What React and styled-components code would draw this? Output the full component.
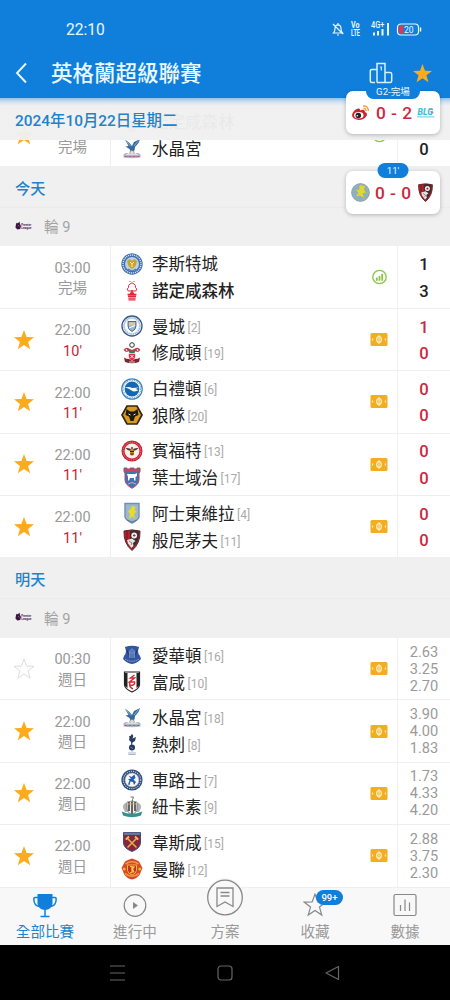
import React from 'react';
import styled, { createGlobalStyle } from 'styled-components';

const GlobalStyle = createGlobalStyle`
  * {
    box-sizing: border-box;
  }
  body {
    margin: 0;
    background: #fff;
    font-family: Roboto, 'Noto Sans CJK TC', sans-serif;
  }
  svg {
    display: block;
  }
`;

const Screen = styled.div`
  position: relative;
  width: 450px;
  height: 1000px;
  display: flex;
  flex-direction: column;
  overflow: hidden;
`;
const Header = styled.header`
  height: 98px;
  flex: none;
  background: #107fdc;
  color: #e8f8ff;
`;
const StatusBar = styled.div`
  height: 48px;
  padding: 11px 28px 0 66px;
  display: flex;
  align-items: center;
  justify-content: space-between;
  font-size: 15.6px;
`;
const StatusIcons = styled.div`
  display: flex;
  align-items: center;
  padding-bottom: 1px;
`;
const TitleBar = styled.div`
  height: 50px;
  padding: 0 17px 0 15px;
  display: flex;
  align-items: center;
`;
const Title = styled.h1`
  flex: 1;
  margin: 0 0 0 23px;
  padding-top: 2px;
  font-size: 21.5px;
  line-height: 30px;
  font-weight: 500;
`;
const TitleActions = styled.div`
  display: flex;
  align-items: center;
  gap: 19px;
`;

const List = styled.main`
  position: relative;
  height: 790px;
  flex: none;
  padding-top: 6.6px;
  overflow: hidden;
`;
const StickyDay = styled.div`
  position: absolute;
  top: 0;
  left: 0;
  width: 100%;
  height: 42px;
  padding: 0 15px 1px;
  display: flex;
  align-items: center;
  background: linear-gradient(#8fc0eb 0, #d3e3f1 4px, rgba(240, 240, 240, 0.97) 8px);
  color: #1d83cc;
  font-size: 15.4px;
  font-weight: 500;
`;
const DayHeader = styled.div`
  height: 41px;
  padding: 0 15px;
  display: flex;
  align-items: center;
  background: #f0f0f0;
  border-bottom: 1px solid #ebebeb;
  color: #1d83cc;
  font-size: 15.2px;
  font-weight: 500;
`;
const RoundHeader = styled.div`
  height: 38.5px;
  padding: 0 15px 2.5px;
  display: flex;
  align-items: center;
  gap: 12px;
  background: #f0f0f0;
  color: #a3a3a3;
  font-size: 14.6px;
`;

const Row = styled.div`
  height: 62.4px;
  display: flex;
  background: #fff;
  border-bottom: 1px solid #efefef;
`;
const StarCell = styled.div`
  width: 48px;
  display: flex;
  align-items: center;
  justify-content: center;
`;
const TimeCell = styled.div`
  width: 49px;
  margin-right: 13px;
  padding-top: 4px;
  display: flex;
  flex-direction: column;
  justify-content: center;
  align-items: center;
  color: #999;
  font-size: 14.5px;
  line-height: 20.4px;
  white-space: nowrap;
`;
const StateText = styled.span`
  margin-top: ${p => (p.$alone ? 21 : 0)}px;
`;
const Minute = styled.span`
  color: #c41f35;
`;
const Teams = styled.div`
  flex: 1;
  padding-left: 9.5px;
  display: flex;
  flex-direction: column;
  justify-content: center;
  border-left: 1px solid #eee;
`;
const Team = styled.div`
  height: 26.8px;
  display: flex;
  align-items: center;
  color: #222;
  font-size: 16.5px;
  line-height: 24px;
  font-weight: ${p => (p.$winner ? 500 : 400)};
`;
const TeamName = styled.span`
  margin-left: 9.5px;
  padding-top: 3px;
`;
const Rank = styled.span`
  margin-left: 2.5px;
  padding-top: 3px;
  color: #aaa;
  font-size: 12px;
`;
const MarkCell = styled.div`
  width: 35px;
  padding-right: 1px;
  display: flex;
  align-items: center;
  justify-content: center;
`;
const ScoreCell = styled.div`
  width: 53px;
  padding-top: 3px;
  display: flex;
  flex-direction: column;
  align-items: center;
  justify-content: center;
  border-left: 1px solid #f1f1f1;
  color: ${p => (p.$live ? '#c9293f' : '#222')};
  font-size: 16.6px;
  line-height: 26.4px;
  font-weight: 500;
`;
const OddsCell = styled(ScoreCell)`
  padding-top: 1px;
  color: #9a9a9a;
  font-size: 14.6px;
  line-height: 17px;
  font-weight: 400;
`;

const FloatCard = styled.div`
  position: absolute;
  top: ${p => p.$top}px;
  left: 346px;
  width: 94px;
  height: 43px;
  padding: 0 5px;
  display: flex;
  align-items: center;
  justify-content: space-between;
  background: #fff;
  border-radius: 7px;
  box-shadow: 0 1px 4px rgba(0, 0, 0, 0.25);
  color: #c9293f;
  font-size: 17.3px;
  font-weight: 500;
  word-spacing: 1px;
`;
const FloatScore = styled.span`
  padding-top: 1px;
`;
const FloatLabel = styled.span`
  position: absolute;
  top: -7.5px;
  left: 50%;
  transform: translateX(-50%);
  width: ${p => p.$width}px;
  height: 15px;
  line-height: 15px;
  border-radius: 8px;
  background: #107fdc;
  color: #e8f8ff;
  font-size: 9.6px;
  font-weight: 400;
  text-align: center;
  word-spacing: 0;
`;

const TabBar = styled.nav`
  height: 57px;
  flex: none;
  display: flex;
  background: #f8f8f8;
`;
const Tab = styled.div`
  position: relative;
  width: 90px;
  padding-top: ${p => (p.$raised ? 0 : 5)}px;
  display: flex;
  flex-direction: column;
  align-items: center;
  color: ${p => (p.$active ? '#1d83cc' : '#999')};
  font-size: 14.6px;
  line-height: 20px;
`;
const TabIcon = styled.div`
  height: ${p => (p.$raised ? 34 : 29)}px;
  margin-top: ${p => (p.$raised ? -10 : 0)}px;
  margin-bottom: ${p => (p.$raised ? 10 : 0)}px;
`;
const Badge = styled.span`
  position: absolute;
  top: 2px;
  left: 46px;
  width: 27px;
  height: 15px;
  line-height: 15px;
  border-radius: 8px;
  background: #107fdc;
  color: #fff;
  font-size: 9.5px;
  font-weight: 500;
  text-align: center;
`;
const SystemNav = styled.div`
  height: 55px;
  flex: none;
  padding: 0 109px;
  display: flex;
  align-items: center;
  justify-content: space-between;
  background: #000;
`;

const STAR = 'M11 1 L13.6 8.1 L21 8.3 L15.1 12.9 L17.2 20.2 L11 16 L4.8 20.2 L6.9 12.9 L1 8.3 L8.4 8.1 Z';

const Star = ({ size = 22, fill = '#fcab1c', stroke = 'none', width = 1 }) => (
  <svg width={size} height={size} viewBox="0 0 22 22">
    <path d={STAR} fill={fill} stroke={stroke} strokeWidth={width} />
  </svg>
);

const crests = {
  leicester: (
    <>
      <circle cx="11" cy="11" r="10.7" fill="#3f6fae" />
      <circle cx="11" cy="11" r="9" fill="none" stroke="#d5e3f4" strokeWidth="1.3" strokeDasharray="1.2 .8" />
      <circle cx="11" cy="11" r="7" fill="#bdd0e4" />
      <path d="M6 8 L9 6 L11 8 L13 6 L16 8 L14.5 13 L11 16 L7.5 13 Z" fill="#c9a227" />
      <path d="M9 9 L11 11 L13 9 M11 11 V14" stroke="#fff2b0" fill="none" />
      <path d="M7 16 L11 18 L15 16" stroke="#3f6fae" fill="none" />
    </>
  ),
  forest: (
    <>
      <path d="M8.5 1.5 H9.5 M12.5 1.5 H13.5" stroke="#e33" />
      <path d="M9 4 Q11 1.5 13 4 Q15 5 14.5 7.5 Q17 9 14.8 11 H7.2 Q5 9 7.5 7.5 Q7 5 9 4 Z" fill="#fff" stroke="#dd2935" strokeWidth="1" />
      <path d="M11 10 V15 M9 13 L11 14 L13 13" stroke="#dd2935" strokeWidth="1.5" fill="none" />
      <path d="M6.5 14.5 H15.5 M7 16.3 H15 M7.3 18.1 H14.7 M7.5 19.9 H14.5" stroke="#dd2935" strokeWidth="1.4" />
    </>
  ),
  mancity: (
    <>
      <circle cx="11" cy="11" r="10" fill="#f3f6fa" stroke="#345985" strokeWidth="1.3" />
      <circle cx="11" cy="11" r="8" fill="none" stroke="#9dbbd9" strokeWidth="1.6" strokeDasharray="1.5 .6" />
      <circle cx="11" cy="11" r="6.3" fill="#fff" />
      <path d="M7 6.500 H15 V11 Q15 14.5 11 16.5 Q7 14.5 7 11 Z" fill="#9ab4cb" stroke="#31507d" strokeWidth=".8" />
      <path d="M8 7.500 H14 V10.5 H8 Z" fill="#e0c795" />
      <path d="M8 13 L14 10.5" stroke="#fff" />
    </>
  ),
  southampton: (
    <>
      <circle cx="11" cy="3" r="2.3" fill="#fff" stroke="#333" />
      <path d="M2.5 8 Q5 4.5 8 6.5 L11 8 L14 6.5 Q17 4.5 19.5 8 L17 10 L12.5 9 L11 12 L9.5 9 L5 10 Z" fill="#c93a4c" />
      <path d="M5 7 L6 9 M16 7 L17 9" stroke="#fff" />
      <path d="M7.500 7 L11 10 L14.500 7 L13.500 11.500 H8.500 Z" fill="#2f7b50" />
      <path d="M7.5 11.5 H14.5 V15 Q14 18 11 19 Q8 18 7.5 15 Z" fill="#d93343" stroke="#fff" strokeWidth=".6" />
      <path d="M9.5 13 L12.5 16 M12.5 13 L9.5 16" stroke="#fff" strokeWidth=".9" />
      <path d="M3 15.5 Q5 17 8 17 L11 19 L14 17 Q17 17 19 15.5 L18 20 Q11 22.5 4 20 Z" fill="#7d2630" />
      <path d="M8 20 H14" stroke="#e9c2c2" />
    </>
  ),
  brighton: (
    <>
      <circle cx="11" cy="11" r="10.2" fill="#fff" stroke="#3b82bd" strokeWidth="1.2" />
      <circle cx="11" cy="11" r="8.8" fill="none" stroke="#6ea7d3" strokeWidth="1.2" strokeDasharray="1 .8" />
      <circle cx="11" cy="11" r="7.4" fill="#1568ae" />
      <path d="M3.8 9.6 Q8 8 11 10 L18 9.5 L14.5 11 L17.5 12 Q14 14.5 10.5 12.5 Q8.5 10.8 3.8 9.6 Z" fill="#fff" />
    </>
  ),
  wolves: (
    <>
      <path d="M6 2 H16 L21 11 L16 20 H6 L1 11 Z" fill="#d69b1f" stroke="#302615" strokeWidth="1.7" />
      <path d="M5.5 5 L9 7.5 H13 L16.5 5 L17.5 11 L14 12.5 L12.5 17 H9.5 L8 12.5 L4.5 11 Z" fill="#1c1915" />
      <path d="M7.5 10 L9.5 11 M14.5 10 L12.5 11" stroke="#fff" strokeWidth=".9" />
    </>
  ),
  brentford: (
    <>
      <circle cx="11" cy="11" r="10.5" fill="#c8202f" />
      <circle cx="11" cy="11" r="8.9" fill="none" stroke="#ef9ba0" strokeWidth=".8" strokeDasharray="1.3 1" />
      <circle cx="11" cy="11" r="7.5" fill="#f6efe9" />
      <path d="M4.500 8 Q9 7.5 11 10 Q13 7.5 17.500 8 Q15 11.5 11.5 11 H10.5 Q7 11.5 4.500 8 Z" fill="#4b4038" />
      <ellipse cx="11" cy="12.300" rx="2" ry="3.500" fill="#c98a33" />
      <path d="M9 11.5 H13 M9.2 14 H12.8 M11 7 V9" stroke="#272018" strokeWidth="1.2" />
    </>
  ),
  ipswich: (
    <>
      <path d="M3 1 H6 V2 H9 V1 H13 V2 H16 V1 H19 V5 L18 6 V13 Q18 17.5 11 21.3 Q4 17.5 4 13 V6 L3 5 Z" fill="#4272b4" stroke="#b8485a" strokeWidth="1" />
      <path d="M3.5 3.5 H18.5" stroke="#cb4a5a" strokeWidth="1.600" />
      <path d="M6 7 L14 7 L16 6 V9 L14.5 10 V13.500 H13 V11 H9 L8 13.500 H7 V10 Z" fill="#fff" />
      <path d="M7 17 L11 15.5 L15 17" stroke="#d8a7ae" fill="none" />
    </>
  ),
  villa: (
    <>
      <path d="M4 1.5 H18 V15 Q17.5 18 11 21 Q4.500 18 4 15 Z" fill="#9fb7cb" stroke="#6f91b2" strokeWidth="1.4" />
      <path d="M11 4 L14.500 5 L13.500 8 L15.500 9.5 L13 12 L14 17 L11.5 14.5 L8 17 L9 12 L7 9 L9.500 7.5 Z" fill="#eadb25" />
      <path d="M6 18 L11 20 L16 18" stroke="#58779b" fill="none" />
    </>
  ),
  villaRound: (
    <>
      <circle cx="11" cy="11" r="10.3" fill="#8caec6" stroke="#6d8caa" strokeWidth=".8" />
      <circle cx="11" cy="11" r="9" fill="none" stroke="#aab88a" strokeWidth="1.5" strokeDasharray="1.2 1" />
      <path d="M10 2.500 L16 3.500 L15 8 L17.500 11 L13.500 12 L15 17 L10 14.500 L6 16 L8.500 11 L5.500 7.500 L9.500 8 Z" fill="#e6d625" />
    </>
  ),
  bournemouth: (
    <>
      <path d="M3 2 Q11 -.2 19 2 Q19.5 14.5 11 21.5 Q2.500 14.5 3 2 Z" fill="#b5202b" stroke="#55252a" strokeWidth="1" />
      <path d="M9 2 Q14 0 18 3 Q18 10 15 15 L11 20 L9 12 Z" fill="#382d2f" />
      <path d="M6 2 V13" stroke="#7c1d26" strokeWidth="1.300" />
      <circle cx="13.2" cy="6.500" r="2.900" fill="#eee" />
      <path d="M13.200 5.200 V7.700 M12 6.500 H14.500" stroke="#b5202b" />
      <path d="M6 11 L11 9.500 L14.500 12 L12 14 L12.500 17 L10.500 19 L7 14.500 Z" fill="#e7e2e0" />
      <path d="M8 12 L11 14 L10 16" stroke="#6a5557" strokeWidth=".7" fill="none" />
    </>
  ),
  everton: (
    <>
      <path d="M4 3 Q11 .5 18 3 L17 7 Q17 10 19 12 L20 15 Q16 19.500 11 20 Q6 19.500 2 15 L3 12 Q5 10 5 7 Z" fill="#31559e" />
      <path d="M8.500 14 V7 L11 4.500 L13.500 7 V14 M8 9 H14" fill="#5877b4" stroke="#7f97c8" strokeWidth=".7" />
      <path d="M4 15 Q11 19.500 18 15" stroke="#93a9d0" fill="none" strokeWidth="1" strokeDasharray="1.500 .7" />
      <path d="M6 6 L7.500 11 M16 6 L14.500 11" stroke="#1d3975" />
    </>
  ),
  fulham: (
    <>
      <path d="M3.500 1 H18.500 V14 Q18 18 11 21 Q4 18 3.500 14 Z" fill="#fff" stroke="#222" strokeWidth="1.200" />
      <path d="M4 2 H6.500 V17 L4 15 Z M15.500 2 H18 V15 L15.500 17 Z" fill="#222" />
      <path d="M13.500 4 L9.500 7 H13.500 L8.500 11 H13.500 Q14.500 14.500 9 14.500 M9 11 Q7.500 16 12 18" fill="none" stroke="#d52b35" strokeWidth="1.500" />
    </>
  ),
  palace: (
    <>
      <path d="M4 1.500 L8.500 5 L11 8 L13 4 L19 1 L17.500 5 L14 9 L13.500 12.500 L10 14.500 L8.500 11 L4.500 8.500 L7.500 8 Z" fill="#39699c" />
      <path d="M5.500 3.500 L10 8.500 M17.500 2.500 L13 8" stroke="#8eb5d2" strokeWidth=".9" />
      <circle cx="11" cy="14.800" r="2.300" fill="#ddd" stroke="#777" strokeWidth=".6" />
      <path d="M2.500 16.500 Q5 14 8 16 H14 Q17 14 19.500 16.500 V19.500 Q11 21 2.500 19.500 Z" fill="#b4b6c6" />
      <path d="M3.500 18.500 H18.500" stroke="#a65a76" strokeWidth=".9" strokeDasharray="3 1" />
      <path d="M5 16.500 H17" stroke="#e4e4ea" strokeWidth=".8" />
    </>
  ),
  spurs: (
    <>
      <path d="M8 3.500 L10 2.500 L11 .8 L12.300 3 L11.500 5.500 L15 4 L14 8 L11.500 9.500 L11 12 H10.300 L10 9 L8 7 L8.500 5 Z" fill="#273a5f" />
      <circle cx="11" cy="14.500" r="3" fill="#22385f" />
      <path d="M9.500 14 L12 15.500" stroke="#a2aabf" strokeWidth=".7" />
      <path d="M10 18 H12 M7 20 H15 M7.500 21.500 H14.500" stroke="#a3aabb" strokeWidth=".9" />
    </>
  ),
  chelsea: (
    <>
      <circle cx="11" cy="11" r="10.600" fill="#2b4a86" />
      <circle cx="11" cy="11" r="8.700" fill="none" stroke="#c5cde0" strokeWidth="1.100" strokeDasharray="1.200 1" />
      <circle cx="11" cy="11" r="7" fill="#f5f6fa" stroke="#b1a27c" strokeWidth=".6" />
      <path d="M7.500 6.500 L10.500 8 L13.500 5.500 L14.500 9 L12.500 10.500 L15 13 L13 16 L12 13 L9.500 12.500 L8.500 16 L7 15.500 L8.500 11.500 L7 10 L10 9.800 Z" fill="#295bb2" />
    </>
  ),
  newcastle: (
    <>
      <path d="M9.500 1 H12.500 L11.500 3.500 V6" stroke="#777" fill="none" />
      <path d="M2 12 Q1.500 8 5 6.500 L7 10 H15 L17 6.500 Q20.500 8 20 12 L18 16 H4 Z" fill="#b3b3b5" />
      <path d="M6 6 Q11 4 16 6 V13 Q15.500 17 11 19 Q6.500 17 6 13 Z" fill="#eee" stroke="#555" strokeWidth=".6" />
      <path d="M8 6 V15 M11 5.500 V18 M14 6 V15" stroke="#292929" strokeWidth="1.400" />
      <path d="M7 8 H15" stroke="#c5a26c" strokeWidth="1" />
      <path d="M.8 15.500 Q11 20 21.200 15.500 L20 19.500 Q11 23 2 19.500 Z" fill="#35918f" />
    </>
  ),
  westham: (
    <>
      <path d="M2.500 1.500 H19.500 V12 Q19 17.500 11 20.500 Q3 17.500 2.500 12 Z" fill="#84273e" stroke="#4a4a76" strokeWidth="1" />
      <path d="M3 2.800 H19" stroke="#647ba8" strokeWidth="2.200" />
      <path d="M6 7 L15.500 16.500 M16 7 L6.500 16.500" stroke="#e9a44e" strokeWidth="1.700" />
      <path d="M4.800 8.500 L8 5.500 M14 5.500 L17.200 8.500" stroke="#f0b657" strokeWidth="1.900" />
    </>
  ),
  manutd: (
    <>
      <path d="M4 3.500 Q7.500 1.500 11 .5 Q14.500 1.500 18 3.500 L21.500 10 L18.500 17 Q15 21 11 21.500 Q7 21 3.500 17 L.5 10 Z" fill="#d8492b" />
      <path d="M4.500 6 Q11 1.500 17.500 6 M4 15.500 Q11 21 18 15.500" stroke="#ef9a3a" strokeWidth="1.600" fill="none" />
      <path d="M6.500 7 H15.500 V12.500 Q15 15.500 11 17 Q7 15.500 6.500 12.500 Z" fill="#c8301f" stroke="#f3b63b" strokeWidth="1" />
      <path d="M9 8.500 L13 9 L11.500 11 L13 14.500 M11 9 V14.500 L9 15" stroke="#f9d64f" strokeWidth="1.200" fill="none" />
      <circle cx="3.200" cy="11" r="1.500" fill="#efb43a" />
      <circle cx="18.800" cy="11" r="1.500" fill="#efb43a" />
    </>
  ),
};

const Crest = ({ name, size = 22 }) => (
  <svg width={size} height={size} viewBox="0 0 22 22">{crests[name]}</svg>
);

const WeiboLogo = () => (
  <svg width="20" height="20" viewBox="0 0 20 20">
    <path d="M1 12 Q2 7 7 5.500 Q9.500 5 9 7.500 Q14 5.500 14 9 Q17 10 15.500 13 Q13 17 7.500 17 Q1 16 1 12 Z" fill="#d3202f" />
    <ellipse cx="7.800" cy="12.200" rx="4.700" ry="3.200" fill="#fff" />
    <circle cx="7.300" cy="12.500" r="2.800" fill="#222" />
    <circle cx="6.300" cy="12.800" r=".8" fill="#fff" />
    <path d="M12 3 Q17 2.500 17.500 8 M12.500 5.500 Q15 5 15 8" stroke="#e9a046" strokeWidth="1.400" fill="none" />
  </svg>
);

const BlgLogo = () => (
  <svg width="18" height="10" viewBox="0 0 18 10">
    <text x=".5" y="7.300" fontSize="8.500" fontWeight="900" fontStyle="italic" fill="#45c1d3" textLength="15.500" lengthAdjust="spacingAndGlyphs">BLG</text>
    <path d="M11.500 1.300 H15.500 M14 4.500 H16.500" stroke="#d86483" strokeWidth=".8" />
    <path d="M0 8.900 H17.500" stroke="#63cddb" />
  </svg>
);

const LeagueLogo = () => (
  <svg width="17" height="10" viewBox="0 0 17 10">
    <path d="M1.500 1.800 L3 2.200 L4.500 .5 L5 3 L6 5 L5.200 8 L2.500 8.500 L.5 6.800 L.8 4 Z" fill="#3c1646" />
    <path d="M3 4 L4.500 5.500" stroke="#a890b0" strokeWidth=".6" />
    <text x="6.300" y="4.700" fontSize="3.600" fontWeight="700" fill="#4b2454" textLength="10" lengthAdjust="spacingAndGlyphs">Premier</text>
    <text x="6.300" y="7.700" fontSize="3.600" fontWeight="700" fill="#4b2454" textLength="10" lengthAdjust="spacingAndGlyphs">League</text>
  </svg>
);

const Ticket = () => (
  <svg width="18" height="13" viewBox="0 0 18 13">
    <rect x=".5" width="17" height="13" rx="1.500" fill="#f2ad20" />
    <ellipse cx="9" cy="6.500" rx="2.300" ry="3" fill="none" stroke="#fff3c9" strokeWidth="1.200" />
    <path d="M9 2 V11" stroke="#fff3c9" strokeWidth="1" />
    <path d="M2.600 5.500 V7.500 M15.400 5.500 V7.500" stroke="#fff3c9" strokeWidth="1.100" />
  </svg>
);

const StatsMark = () => (
  <svg width="16" height="16" viewBox="0 0 16 16">
    <circle cx="8.500" cy="8" r="6.700" fill="#fff" stroke="#8bc34a" strokeWidth="1.300" />
    <path d="M5.800 8.500 V11.800 M8.500 7 V11.800 M11.200 4.800 V11.800" stroke="#8bc34a" strokeWidth="1.800" />
  </svg>
);

const StatusGlyphs = () => (
  <svg width="92" height="18" viewBox="0 0 92 18" fill="none" stroke="#e8f8ff">
    <path d="M3.500 13 H12.500 Q11 11.500 11 8.500 Q11 5 8 4.800 Q5 5 5 8.500 Q5 11.500 3.500 13 Z M7 15 H9 M8 3 V5 M3 4 L13 14" strokeWidth="1.200" />
    <g fill="#e8f8ff" stroke="none" fontWeight="700">
      <text x="21" y="8.300" fontSize="8.500" textLength="8.500" lengthAdjust="spacingAndGlyphs">Vo</text>
      <text x="21" y="15.500" fontSize="8.500" textLength="9" lengthAdjust="spacingAndGlyphs">LTE</text>
      <text x="41" y="8" fontSize="8.500" fontWeight="500" textLength="13.500" lengthAdjust="spacingAndGlyphs">4G+</text>
      <path d="M43 12.500 H45 V15.500 H43 Z M47 11 H49 V15.500 H47 Z M51.500 9 H53.500 V15.500 H51.500 Z M57 3 H59 V15.500 H57 Z" />
    </g>
    <rect x="67.500" y="4" width="21" height="11" rx="3.500" strokeWidth="1.200" />
    <path d="M70 5 H73 V14 H70 Q68.500 13 68.500 9.500 Q68.500 6 70 5 Z" fill="#e8354c" stroke="none" />
    <path d="M90.500 7.500 V11.500" strokeWidth="1.500" />
    <text x="74" y="12.500" fontSize="8.500" fill="#e8f8ff" stroke="none">20</text>
  </svg>
);

const Podium = () => (
  <svg width="24" height="22" viewBox="0 0 24 22" fill="none" stroke="#d7f0ff" strokeWidth="1.500">
    <path d="M8 20.500 V1.500 H16 V20.500 M8 7.500 H3 Q1.300 7.500 1.300 9 V19 Q1.300 20.500 3 20.500 H6 M8 20.500 H21 Q22.700 20.500 22.700 19 V12 Q22.700 10.500 21 10.500 H16" />
    <path d="M11 5 H12.300 V8.500" strokeWidth="1.200" />
  </svg>
);

const tabIcons = {
  trophy: (
    <svg width="26" height="26" viewBox="0 0 26 26" fill="none" stroke="#1580d6" strokeWidth="1.500">
      <path d="M5.500 1 H20.500 V11 Q19.500 16.500 13 17 Q6.500 16.500 5.500 11 Z" fill="#107fdc" stroke="none" />
      <path d="M6 4.500 H3 Q1.800 4.500 1.800 6 Q2 12.500 7 13.500 M20 4.500 H23 Q24.200 4.500 24.200 6 Q24 12.500 19 13.500 M13 16 V23 M8.500 23.500 H17.500" />
    </svg>
  ),
  play: (
    <svg width="24" height="26" viewBox="0 0 24 26">
      <circle cx="12" cy="12.500" r="10.800" fill="none" stroke="#888" strokeWidth="1.200" />
      <path d="M10 9 L15 12.500 L10 16 Z" fill="#888" />
    </svg>
  ),
  plan: (
    <svg width="40" height="40" viewBox="0 0 40 40" fill="none" stroke="#888" strokeWidth="1.300">
      <circle cx="20" cy="19.500" r="19.500" fill="#f8f8f8" stroke="none" />
      <circle cx="20" cy="19.500" r="17.300" />
      <path d="M12 10 H28 V28.500 L20 24 L12 28.500 Z M15.500 14.500 H24.500 M15.500 18 H24.500" />
    </svg>
  ),
  star: <Star size={24} fill="none" stroke="#888" width={1.1} />,
  chart: (
    <svg width="24" height="26" viewBox="0 0 24 26" fill="none" stroke="#888" strokeWidth="1.200">
      <rect x="1" y="1.500" width="22" height="21" rx="1.500" />
      <path d="M7.500 12 V18 M12 6.500 V18 M16.500 9.500 V18" />
    </svg>
  ),
};

const previous = {
  star: true, state: '完場', mark: 'stats', score: ['1', '0'],
  teams: [['forest', '諾定咸森林', null, true], ['palace', '水晶宮']],
};

const today = [
  { time: '03:00', state: '完場', mark: 'stats', score: ['1', '3'], teams: [['leicester', '李斯特城'], ['forest', '諾定咸森林', null, true]] },
  { star: true, time: '22:00', minute: "10'", score: ['1', '0'], teams: [['mancity', '曼城', 2], ['southampton', '修咸頓', 19]] },
  { star: true, time: '22:00', minute: "11'", score: ['0', '0'], teams: [['brighton', '白禮頓', 6], ['wolves', '狼隊', 20]] },
  { star: true, time: '22:00', minute: "11'", score: ['0', '0'], teams: [['brentford', '賓福特', 13], ['ipswich', '葉士域治', 17]] },
  { star: true, time: '22:00', minute: "11'", score: ['0', '0'], teams: [['villa', '阿士東維拉', 4], ['bournemouth', '般尼茅夫', 11]] },
];

const tomorrow = [
  { star: false, time: '00:30', state: '週日', odds: ['2.63', '3.25', '2.70'], teams: [['everton', '愛華頓', 16], ['fulham', '富咸', 10]] },
  { star: true, time: '22:00', state: '週日', odds: ['3.90', '4.00', '1.83'], teams: [['palace', '水晶宮', 18], ['spurs', '熱刺', 8]] },
  { star: true, time: '22:00', state: '週日', odds: ['1.73', '4.33', '4.20'], teams: [['chelsea', '車路士', 7], ['newcastle', '紐卡素', 9]] },
  { star: true, time: '22:00', state: '週日', odds: ['2.88', '3.75', '2.30'], teams: [['westham', '韋斯咸', 15], ['manutd', '曼聯', 12]] },
];

const tabs = [
  { icon: 'trophy', label: '全部比賽', active: true },
  { icon: 'play', label: '進行中' },
  { icon: 'plan', label: '方案', raised: true },
  { icon: 'star', label: '收藏', badge: '99+' },
  { icon: 'chart', label: '數據' },
];

const Match = ({ match }) => {
  const { star, time, state, minute, mark, score, odds, teams } = match;
  return (
    <Row>
      <StarCell>
        {star === true && <Star />}
        {star === false && <Star fill="#fff" stroke="#ddd" />}
      </StarCell>
      <TimeCell>
        {time && <span>{time}</span>}
        {minute ? <Minute>{minute}</Minute> : <StateText $alone={!time}>{state}</StateText>}
      </TimeCell>
      <Teams>
        {teams.map(([crest, name, rank, winner]) => (
          <Team key={name} $winner={winner}>
            <Crest name={crest} />
            <TeamName>{name}</TeamName>
            {rank && <Rank>[{rank}]</Rank>}
          </Team>
        ))}
      </Teams>
      <MarkCell>{mark === 'stats' ? <StatsMark /> : <Ticket />}</MarkCell>
      {odds ? (
        <OddsCell>{odds.map((o, i) => <span key={i}>{o}</span>)}</OddsCell>
      ) : (
        <ScoreCell $live={Boolean(minute)}>{score.map((s, i) => <span key={i}>{s}</span>)}</ScoreCell>
      )}
    </Row>
  );
};

const Day = ({ title, matches }) => (
  <section>
    <DayHeader>{title}</DayHeader>
    <RoundHeader><LeagueLogo />輪 9</RoundHeader>
    {matches.map((m, i) => <Match key={i} match={m} />)}
  </section>
);

const App = () => (
  <Screen>
    <GlobalStyle />
    <Header>
      <StatusBar>
        <span>22:10</span>
        <StatusIcons><StatusGlyphs /></StatusIcons>
      </StatusBar>
      <TitleBar>
        <svg width="13" height="22" viewBox="0 0 13 22">
          <path d="M11 1.500 L2 11 L11 20.500" fill="none" stroke="#e8f8ff" strokeWidth="1.900" />
        </svg>
        <Title>英格蘭超級聯賽</Title>
        <TitleActions>
          <Podium />
          <Star size={21} />
        </TitleActions>
      </TitleBar>
    </Header>
    <List>
      <Match match={previous} />
      <Day title="今天" matches={today} />
      <Day title="明天" matches={tomorrow} />
      <StickyDay>2024年10月22日星期二</StickyDay>
    </List>
    <TabBar>
      {tabs.map(t => (
        <Tab key={t.icon} $active={t.active} $raised={t.raised}>
          <TabIcon $raised={t.raised}>{tabIcons[t.icon]}</TabIcon>
          {t.label}
          {t.badge && <Badge>{t.badge}</Badge>}
        </Tab>
      ))}
    </TabBar>
    <SystemNav>
      <svg width="17" height="18" viewBox="0 0 17 18">
        <path d="M1 2 H16 M1 9 H16 M1 16 H16" stroke="#666" strokeWidth="1.200" />
      </svg>
      <svg width="16" height="16" viewBox="0 0 16 16">
        <rect x="1" y="1" width="14" height="14" rx="3" fill="none" stroke="#666" strokeWidth="1.200" />
      </svg>
      <svg width="17" height="16" viewBox="0 0 17 16">
        <path d="M2 8 L14.500 1.500 V14.500 Z" fill="none" stroke="#666" strokeWidth="1.200" strokeLinejoin="round" />
      </svg>
    </SystemNav>
    <FloatCard $top={91}>
      <WeiboLogo />
      <FloatScore>0 - 2</FloatScore>
      <BlgLogo />
      <FloatLabel $width={54}>G2-完場</FloatLabel>
    </FloatCard>
    <FloatCard $top={170.5}>
      <Crest name="villaRound" size={19} />
      <FloatScore>0 - 0</FloatScore>
      <Crest name="bournemouth" size={19} />
      <FloatLabel $width={31}>11'</FloatLabel>
    </FloatCard>
  </Screen>
);

export default App;
